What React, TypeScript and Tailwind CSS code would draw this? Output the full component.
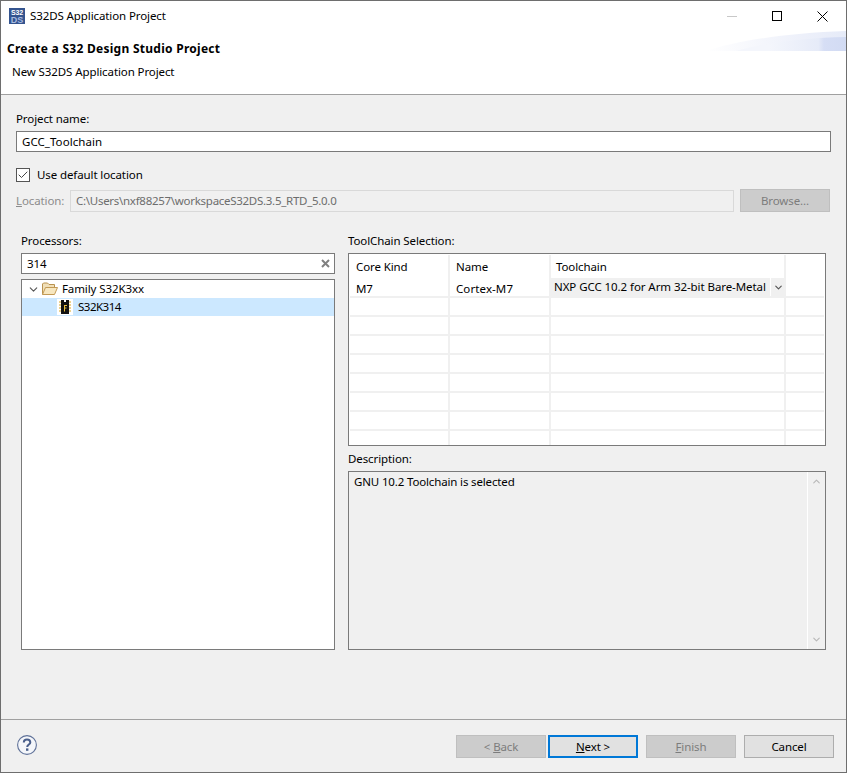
import { Check, ChevronDown, ChevronUp } from "lucide-react"

const font = { fontFamily: '"Noto Sans", "Open Sans", sans-serif' }

function TitleBar() {
  return (
    <div className="flex h-[30px] items-center bg-white">
      {/* S32DS app icon */}
      <svg width="16" height="16" viewBox="0 0 16 16" className="ml-[8px]">
        <rect width="16" height="16" fill="#34548f" />
        <text x="8" y="7" fontSize="7" fontWeight="700" fill="#fff" textAnchor="middle" fontFamily="Liberation Sans">S32</text>
        <text x="8" y="15" fontSize="9" fontWeight="700" fill="#a9bbe0" textAnchor="middle" fontFamily="Liberation Sans">DS</text>
      </svg>
      <span className="ml-[5px] text-[11.5px] text-black">S32DS Application Project</span>
      <div className="ml-auto flex items-center pr-[18px]">
        <div className="h-px w-[10px] bg-[#c8c8c8]" />
        <div className="ml-[35px] h-[10px] w-[10px] border border-black" />
        <svg width="11" height="11" viewBox="0 0 11 11" className="ml-[35px]">
          <path d="M0.5 0.5 L10.5 10.5 M10.5 0.5 L0.5 10.5" stroke="#000" strokeWidth="1" />
        </svg>
      </div>
    </div>
  )
}

function Banner() {
  return (
    <svg width="140" height="20" viewBox="0 0 140 20" className="absolute right-0 top-[30px]">
      <defs>
        <linearGradient id="wave" x1="0" x2="1" y1="0" y2="0">
          <stop offset="0" stopColor="#ffffff" />
          <stop offset="0.7" stopColor="#edf0fa" />
          <stop offset="1" stopColor="#e6ebf8" />
        </linearGradient>
        <linearGradient id="wave2" x1="0" x2="1" y1="0" y2="0">
          <stop offset="0.3" stopColor="#f4f6fc" />
          <stop offset="0.75" stopColor="#e6ebf8" />
          <stop offset="0.8" stopColor="#d6def5" />
          <stop offset="1" stopColor="#d2dbf3" />
        </linearGradient>
      </defs>
      <path d="M0 20 C30 10 80 2 140 0 L140 20 Z" fill="url(#wave)" />
      <path d="M30 20 C60 11 100 7 140 6 L140 20 Z" fill="url(#wave2)" />
    </svg>
  )
}

function Header() {
  return (
    <div className="h-[64px] border-b border-[#a0a0a0] bg-white">
      <div className="pl-[6px] pt-[10px] text-[12px] leading-[16px] font-bold tracking-[0.27px] text-black">Create a S32 Design Studio Project</div>
      <div className="pl-[11px] pt-[7px] text-[11.5px] leading-[16px] text-black">New S32DS Application Project</div>
    </div>
  )
}

function ProjectFields() {
  return (
    <div className="px-[15px] pt-[16px]">
      <div className="h-[20px] text-[11.5px] leading-[16px] text-black">Project name:</div>
      <div className="flex h-[21px] w-[815px] items-center border border-[#7a7a7a] bg-white pl-[5px] text-[11.5px] tracking-[0.05px] text-black">GCC_Toolchain</div>
      <div className="mt-[15px] flex h-[15px] items-center">
        <div className="flex h-[14px] w-[14px] items-center justify-center border border-[#555] bg-white">
          <Check size={12} strokeWidth={2} className="text-[#444]" />
        </div>
        <span className="ml-[7px] text-[11.5px] text-black">Use default location</span>
      </div>
      <div className="mt-[7px] flex h-[23px] items-center">
        <span className="w-[54px] text-[11.5px] text-[#8c8c8c]"><span className="underline">L</span>ocation:</span>
        <div className="flex h-[22px] w-[664px] items-center border border-[#d9d9d9] bg-[#f0f0f0] pl-[5px] text-[11.5px] tracking-[-0.28px] text-[#6d6d6d]">C:\Users\nxf88257\workspaceS32DS.3.5_RTD_5.0.0</div>
        <div className="ml-[6px] flex h-[23px] w-[90px] items-center justify-center border border-[#bfbfbf] bg-[#cccccc] text-[11.5px] text-[#7c7c7c]">Browse...</div>
      </div>
    </div>
  )
}

function ChipIcon() {
  return (
    <div className="flex h-[16px] w-[16px] items-center justify-center bg-white">
      <svg width="14" height="14" viewBox="0 0 14 14">
        <path d="M1 2h2M1 5h2M1 8h2M1 11h2M11 2h2M11 5h2M11 8h2M11 11h2" stroke="#d9a520" strokeWidth="1" />
        <rect x="3" y="0" width="8" height="14" fill="#111" />
        <rect x="6" y="0" width="2" height="2" fill="#fff" />
        <path d="M6 5.5h3M6.5 5.5v6M6.5 8h2" stroke="#e8c040" strokeWidth="1" fill="none" />
      </svg>
    </div>
  )
}

function FolderIcon() {
  return (
    <svg width="16" height="14" viewBox="0 0 16 14">
      <path d="M0.5 12.5 V2 L1.5 1 H5.5 L7 2.5 H12.5 V5" fill="#f0dfb8" stroke="#b9924f" />
      <path d="M0.5 12.5 L3.5 5.5 H15.5 L12.5 12.5 Z" fill="#f7e7c0" stroke="#c39a55" />
    </svg>
  )
}

function ProcessorPanel() {
  return (
    <div className="w-[314px]">
      <div className="h-[20px] text-[11.5px] leading-[16px] text-black">Processors:</div>
      <div className="flex h-[21px] items-center border border-[#7a7a7a] bg-white pl-[5px] pr-[4px] text-[11.5px] text-black">
        <span>314</span>
        <svg width="9" height="9" viewBox="0 0 9 9" className="ml-auto">
          <path d="M1 1 L8 8 M8 1 L1 8" stroke="#808080" strokeWidth="2" />
        </svg>
      </div>
      <div className="mt-[5px] h-[371px] border border-[#7a7a7a] bg-white">
        <div className="flex h-[18px] items-center text-[11.5px] text-black">
          <ChevronDown size={13} strokeWidth={2} className="ml-[5px] text-[#555]" />
          <div className="ml-[2px]"><FolderIcon /></div>
          <span className="ml-[4px]">Family S32K3xx</span>
        </div>
        <div className="flex h-[18px] items-center bg-[#cce8ff] text-[11.5px] text-black">
          <div className="ml-[35px]"><ChipIcon /></div>
          <span className="ml-[5px] tracking-[-0.5px]">S32K314</span>
        </div>
      </div>
    </div>
  )
}

function ToolchainTable() {
  const emptyRows = [0, 1, 2, 3, 4, 5, 6, 7]
  return (
    <div className="h-[193px] w-[478px] overflow-hidden border border-[#7a7a7a] bg-white px-px pt-px">
      <div className="grid h-[23px] grid-cols-[100px_101px_235px_1fr] text-[11.5px] text-black">
        <div className="border-r-2 border-[#f0f0f0] pl-[6px] pt-[3px]">Core Kind</div>
        <div className="border-r-2 border-[#f0f0f0] pl-[6px] pt-[3px]">Name</div>
        <div className="border-r-2 border-[#f0f0f0] pl-[5px] pt-[3px]">Toolchain</div>
        <div />
      </div>
      <div className="grid h-[20px] grid-cols-[100px_101px_235px_1fr] border-b-2 border-[#f0f0f0] text-[11.5px] text-black">
        <div className="border-r-2 border-[#f0f0f0] pl-[6px] pt-[2px]">M7</div>
        <div className="border-r-2 border-[#f0f0f0] pl-[6px] pt-[2px] tracking-[0.1px]">Cortex-M7</div>
        <div className="flex">
          <div className="w-[219px] min-w-0 overflow-hidden bg-[#f0f0f0] pl-[3px] pt-px leading-[16px] tracking-[-0.07px] whitespace-nowrap">NXP GCC 10.2 for Arm 32-bit Bare-Metal</div>
          <div className="ml-px flex flex-1 items-center justify-center bg-[#f0f0f0]">
            <ChevronDown size={11} strokeWidth={2.5} className="text-[#555]" />
          </div>
        </div>
        <div />
      </div>
      {emptyRows.map((r) => (
        <div key={r} className="grid h-[19px] grid-cols-[100px_101px_235px_1fr] border-b-2 border-[#f0f0f0]">
          <div className="border-r-2 border-[#f0f0f0]" />
          <div className="border-r-2 border-[#f0f0f0]" />
          <div className="border-r-2 border-[#f0f0f0]" />
          <div />
        </div>
      ))}
    </div>
  )
}

function DescriptionBox() {
  return (
    <div className="flex h-[179px] w-[478px] border border-[#7a7a7a] bg-[#f0f0f0] text-[11.5px] text-black">
      <div className="flex-1 pl-[5px] pt-[1px] tracking-[-0.15px]">GNU 10.2 Toolchain is selected</div>
      <div className="flex w-[18px] flex-col items-center justify-between border-l border-white py-[3px]">
        <ChevronUp size={11} strokeWidth={2.5} className="mt-[1px] text-[#b8b8b8]" />
        <ChevronDown size={11} strokeWidth={2.5} className="mb-[1px] text-[#b8b8b8]" />
      </div>
    </div>
  )
}

function WizardButton({ children, disabled, focused }: { children: React.ReactNode; disabled?: boolean; focused?: boolean }) {
  let cls = "border border-[#adadad] bg-[#e1e1e1] text-black"
  if (disabled) cls = "border border-[#bfbfbf] bg-[#cccccc] text-[#7c7c7c]"
  if (focused) cls = "border-2 border-[#0078d7] bg-[#e1e1e1] text-black"
  return <div className={"flex h-[23px] w-[90px] items-center justify-center text-[11.5px] " + cls}>{children}</div>
}

function Footer() {
  return (
    <div className="mt-auto h-[53px] border-t border-[#a0a0a0]">
      <div className="flex items-start pl-[16px] pt-[15px]">
        <svg width="20" height="20" viewBox="0 0 20 20">
          <circle cx="10" cy="10" r="9.4" fill="#f4f6fa" stroke="#5f7198" strokeWidth="1.1" />
          <path d="M6.8 7.6 C6.8 5.6 8.2 4.6 10 4.6 C11.9 4.6 13.3 5.7 13.3 7.4 C13.3 9.4 10.2 9.6 10.2 12" fill="none" stroke="#4a5f8c" strokeWidth="2" />
          <rect x="9" y="13.4" width="2.4" height="2.4" fill="#4a5f8c" />
        </svg>
        <div className="ml-auto flex pr-[12px]">
          <WizardButton disabled>&lt; <span className="ml-[3px] underline">B</span>ack</WizardButton>
          <div className="ml-[2px]"><WizardButton focused><span className="underline">N</span>ext &gt;</WizardButton></div>
          <div className="ml-[8px]"><WizardButton disabled><span className="underline">F</span>inish</WizardButton></div>
          <div className="ml-[8px]"><WizardButton>Cancel</WizardButton></div>
        </div>
      </div>
    </div>
  )
}

export default function App() {
  return (
    <div className="relative flex h-[773px] w-[847px] flex-col overflow-hidden border border-[#6e6e6e] bg-[#f0f0f0] tracking-[-0.1px]" style={font}>
      <TitleBar />
      <Banner />
      <Header />
      <ProjectFields />
      <div className="mt-[21px] flex pl-[20px]">
        <ProcessorPanel />
        <div className="ml-[13px]">
          <div className="h-[20px] text-[11.5px] leading-[16px] text-black">ToolChain Selection:</div>
          <ToolchainTable />
          <div className="mt-[5px] h-[20px] text-[11.5px] leading-[16px] text-black">Description:</div>
          <DescriptionBox />
        </div>
      </div>
      <Footer />
    </div>
  )
}
